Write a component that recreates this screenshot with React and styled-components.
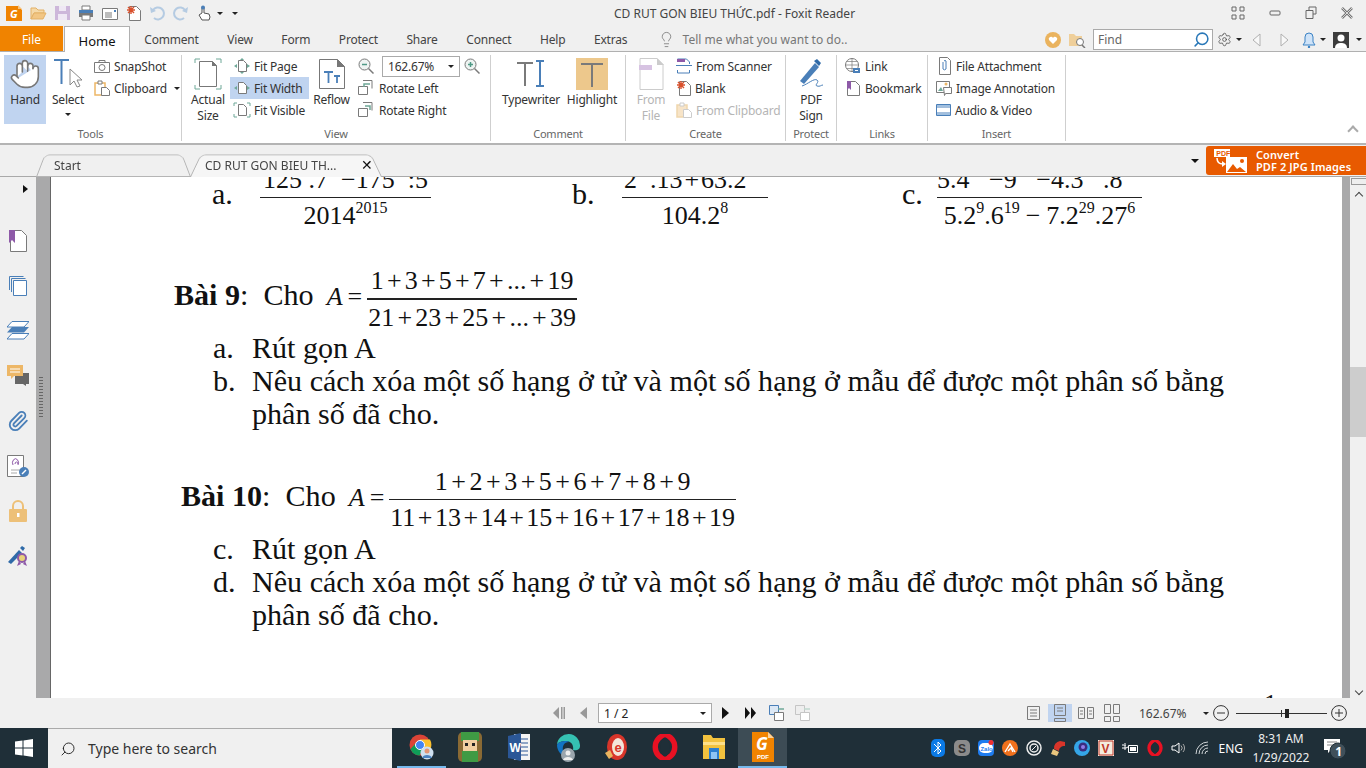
import React from "react";
import styled, { createGlobalStyle } from "styled-components";
import { Hand, Settings, Lightbulb, Search, Paperclip } from "lucide-react";

const GlobalStyle = createGlobalStyle`
    html, body { margin: 0; padding: 0; background: #f0f0f0; }
    body { font-family: "Noto Sans", "Open Sans", sans-serif; font-size: 12px; color: #333; overflow: hidden; }
    svg { display: block; flex: none; }
`;

const BLUE = "#4a7fb8";
const GREY = "#7a7a7a";
const ORANGE = "#edb767";
const PURPLE = "#8e5aa8";
const GREEN = "#6fa898";

const Screen = styled.div`
    width: 1366px; height: 768px; display: flex; flex-direction: column; overflow: hidden;
`;

/* ---------- title bar ---------- */
const TitleBar = styled.div`
    height: 26px; flex: none; display: flex; align-items: center; padding-left: 6px; background: #f0f0f0;
`;
const Qat = styled.div`
    display: flex; align-items: center; gap: 8px; width: 236px; flex: none;
`;
const Title = styled.div`
    margin-left: 372px; width: 300px; font-size: 12px; color: #444; white-space: nowrap;
`;
const WinControls = styled.div`
    margin-left: auto; display: flex; gap: 24px; padding-right: 13px;
`;
const Caret = styled.span`
    display: block; flex: none; width: 0; height: 0;
    border-left: ${p => p.$s || 3}px solid transparent;
    border-right: ${p => p.$s || 3}px solid transparent;
    border-top: ${p => p.$s || 3}px solid ${p => p.$c || "#222"};
`;

/* ---------- menu tabs ---------- */
const MenuBar = styled.div`
    height: 26px; flex: none; display: flex; align-items: stretch; background: #f0f0f0;
    border-bottom: 1px solid #b0b0b0; box-sizing: border-box;
`;
const FileTab = styled.div`
    width: 63px; background: #f08300; color: #fff; display: flex; align-items: center; justify-content: center; padding-top: 2px; box-sizing: border-box;
`;
const MenuTab = styled.div`
    padding: 2px ${p => (p.$active ? 14 : 14.3)}px 0; display: flex; align-items: center; white-space: nowrap; letter-spacing: -.2px;
    color: ${p => (p.$active ? "#111" : "#444")};
    ${p => p.$active && `
        margin: 0 0 -1px 1px; background: #fff; border: 1px solid #b0b0b0; border-bottom: 0; font-size: 13px; letter-spacing: 0;
        height: 26px; box-sizing: border-box; width: 66px; justify-content: center; padding: 2px 0 0;
    `}
`;
const TellMe = styled.div`
    display: flex; align-items: center; gap: 8px; margin-left: 16px; padding-top: 2px; color: #777; white-space: nowrap;
`;
const MenuRight = styled.div`
    margin-left: auto; display: flex; align-items: center; padding: 2px 4px 0 0;
`;
const FindBox = styled.div`
    width: 120px; height: 21px; margin: 0 4px 0 7px; box-sizing: border-box; background: #fff; border: 1px solid #aaa;
    display: flex; align-items: center; justify-content: space-between; padding: 0 2px 0 4px; color: #666;
`;
const Gap = styled.span`
    width: ${p => p.$w}px; flex: none;
`;

/* ---------- ribbon ---------- */
const Ribbon = styled.div`
    height: 93px; flex: none; display: flex; background: #fff; box-sizing: border-box; padding-top: 3px;
    border-bottom: 2px solid #b4b4b4; position: relative; letter-spacing: -.2px;
`;
const Group = styled.div`
    width: ${p => p.$w}px; flex: none; box-sizing: border-box; display: flex; flex-direction: column;
    border-right: 1px solid #cfcfcf; height: 86px;
`;
const GroupBody = styled.div`
    height: 72px; flex: none; display: flex; align-items: flex-start; padding-left: ${p => p.$pad || 0}px; gap: ${p => p.$gap || 0}px;
`;
const GroupLabel = styled.div`
    height: 14px; text-align: center; color: #666; font-size: 11px; line-height: 14px;
`;
const BigButton = styled.div`
    width: ${p => p.$w}px; height: 69px; flex: none; display: flex; flex-direction: column; align-items: center;
    background: ${p => (p.$on ? "#c0d4f0" : "transparent")};
    color: ${p => (p.$off ? "#b5b5b5" : "#333")};
    text-align: center; line-height: 16px; box-sizing: border-box;
`;
const BigIcon = styled.div`
    height: 37px; display: flex; align-items: center; justify-content: center; flex: none;
`;
const SmallCol = styled.div`
    display: flex; flex-direction: column; width: ${p => (p.$w ? p.$w + "px" : "auto")}; flex: none; margin-left: ${p => p.$ml || 0}px;
`;
const SmallButton = styled.div`
    height: 22px; display: flex; align-items: center; gap: ${p => p.$gap ?? 4}px; padding-left: 3px; white-space: nowrap;
    background: ${p => (p.$on ? "#c0d4f0" : "transparent")};
    color: ${p => (p.$off ? "#b5b5b5" : "#333")};
`;
const ZoomInput = styled.div`
    width: 78px; height: 21px; box-sizing: border-box; border: 1px solid #aaa; margin: 0 4px 0 8px; padding: 0 5px;
    display: flex; align-items: center; justify-content: space-between; color: #333;
`;
const Collapse = styled.div`
    position: absolute; right: 9px; bottom: 8px; width: 6px; height: 6px; border-left: 2px solid #aaa; border-top: 2px solid #aaa;
    transform: rotate(45deg);
`;

/* ---------- document tabs ---------- */
const DocTabs = styled.div`
    height: 32px; flex: none; display: flex; align-items: flex-end; background: #f0f0f0; padding-left: 36px;
    border-bottom: 1px solid #a9a9a9; box-sizing: border-box; position: relative;
`;
const DocTab = styled.div`
    position: relative; width: ${p => p.$w}px; height: 25px; margin-left: ${p => p.$ml || 0}px; display: flex; align-items: center;
    padding: 3px 0 0 ${p => (p.$active ? 15 : 18)}px; box-sizing: border-box; color: #444; white-space: nowrap; z-index: ${p => (p.$active ? 2 : 1)};
    &::before {
        content: ""; position: absolute; inset: 0 0 -1px 0; z-index: -1; background: ${p => (p.$active ? "#f6f6f6" : "#f0f0f0")};
        border: 1px solid #b4b4b4; border-bottom: ${p => (p.$active ? "0" : "1px solid #b4b4b4")}; border-radius: 6px 6px 0 0;
        transform: perspective(50px) rotateX(14deg); transform-origin: bottom;
    }
`;
const TabClose = styled.span`
    margin-left: auto; margin-right: 9px; font-size: 14px; color: #111; line-height: 1;
`;
const TabsEnd = styled.div`
    margin-left: auto; align-self: stretch; display: flex; align-items: center; gap: 7px;
`;
const Convert = styled.div`
    width: 160px; height: 29px; background: #e85a00; border-radius: 3px 0 0 3px; color: #fff; display: flex; align-items: center;
    box-sizing: border-box; padding-left: 8px; gap: 8px; font-size: 11px; line-height: 12px; font-weight: 600; letter-spacing: .1px;
`;

/* ---------- main area ---------- */
const Main = styled.div`
    flex: 1; min-height: 0; display: flex;
`;
const SideNav = styled.div`
    width: 36px; flex: none; background: #f0f0f0; display: flex; flex-direction: column; align-items: center; position: relative;
`;
const SideArrow = styled.div`
    width: 0; height: 0; margin: 8px 0 25px 14px; border-top: 4px solid transparent; border-bottom: 4px solid transparent; border-left: 5px solid #111;
`;
const SideIcon = styled.div`
    height: 45px; display: flex; align-items: center; justify-content: center;
`;
const Gutter = styled.div`
    width: 14px; flex: none; background: #a9a9aa; border-right: 1px solid #666; position: relative;
`;
const Grip = styled.div`
    position: absolute; left: 3px; top: 199px; width: 4px; height: 43px;
    background-image: radial-gradient(#666 45%, transparent 50%); background-size: 2px 3px;
`;
const Page = styled.div`
    width: 1291px; flex: none; background: #fff; overflow: hidden; font-family: "Liberation Serif", "Times New Roman", serif; color: #111;
`;
const Sheet = styled.div`
    margin-top: -9px; display: flex; flex-direction: column;
`;
const ExerciseRow = styled.div`
    display: flex; align-items: flex-start; padding-left: 161px; height: 60px;
`;
const Exercise = styled.div`
    width: ${p => p.$w}px; flex: none; display: flex; align-items: center; height: 60px;
`;
const Marker = styled.span`
    width: ${p => p.$w}px; flex: none; font-size: 30.1px; margin-top: -8px;
`;
const Fraction = styled.span`
    display: inline-flex; flex-direction: column; align-items: center; font-size: 26px; line-height: 30px; white-space: pre; flex: none;
    width: ${p => (p.$w ? p.$w + "px" : "auto")};
`;
const Numer = styled.span`
    padding-bottom: 2px; align-self: stretch; text-align: center; border-bottom: ${p => p.$thick || 1.5}px solid #222;
`;
const Denom = styled.span`
    padding: 3px 1px 0; align-self: stretch; text-align: center;
`;
const Op = styled.span`
    margin: 0 ${p => p.$g}px;
`;
const Sup = styled.sup`
    font-size: 16px; line-height: 0; vertical-align: 11px;
`;
const Statement = styled.div`
    display: flex; align-items: center; padding-left: ${p => p.$left}px; margin-top: ${p => p.$top}px; height: 70px; font-size: 30.1px; white-space: pre;
`;
const Lead = styled.span`
    display: flex; align-items: baseline; margin-bottom: 8px;
`;
const Bold = styled.b`
    font-weight: 700;
`;
const VarA = styled.i`
    font-size: 26px; margin: 0 5px 0 -2px;
`;
const Equals = styled.span`
    font-size: 26px; margin-right: 5px;
`;
const Tasks = styled.div`
    display: grid; grid-template-columns: 39px 990px; padding-left: 162px; font-size: 30.1px; line-height: 33px; margin-top: ${p => p.$top}px;
`;
const PageNumber = styled.div`
    margin: 57px 0 0 1213px; font-size: 26px; line-height: 30px;
`;
const ScrollBar = styled.div`
    width: 25px; flex: none; display: flex;
`;
const ScrollEdge = styled.div`
    width: 8px; background: #a9a9aa; flex: none;
`;
const ScrollTrack = styled.div`
    flex: 1; background: #f0f0f0; display: flex; flex-direction: column; align-items: center;
`;
const Splitter = styled.div`
    width: 16px; height: 7px; border: 1px solid #999; box-sizing: border-box; background: #eee; margin-top: 1px; flex: none;
`;
const Chevron = styled.div`
    width: 5px; height: 5px; border-left: 1.5px solid #444; border-top: 1.5px solid #444; flex: none;
    transform: rotate(${p => (p.$down ? 225 : 45)}deg); margin: ${p => p.$m};
`;
const Thumb = styled.div`
    width: 17px; height: 70px; background: #cdcdcd; margin-top: 168px; flex: none;
`;

/* ---------- status bar ---------- */
const StatusBar = styled.div`
    height: 30px; flex: none; display: flex; align-items: center; background: #f0f0f0; padding-left: 552px;
`;
const PageInput = styled.div`
    width: 114px; height: 20px; box-sizing: border-box; margin: 0 9px 0 10px; border: 1px solid #aaa; background: #fff; color: #222;
    display: flex; align-items: center; justify-content: space-between; padding: 0 5px;
`;
const ViewMode = styled.div`
    width: 24px; height: 18px; display: flex; align-items: center; justify-content: center; background: ${p => (p.$on ? "#c0d4f0" : "transparent")};
    margin-right: 2px;
`;
const ZoomValue = styled.div`
    margin-left: 13px; width: 64px; color: #444; flex: none;
`;
const Slider = styled.div`
    position: relative; width: 91px; height: 1px; background: #333; margin: 0 4px 0 7px;
`;
const SliderKnob = styled.div`
    position: absolute; left: 49px; top: -4px; width: 4px; height: 9px; background: #222;
`;
const SliderTick = styled.div`
    position: absolute; left: 45px; top: -3px; width: 1px; height: 7px; background: #333;
`;

/* ---------- taskbar ---------- */
const Taskbar = styled.div`
    height: 40px; flex: none; display: flex; background: #1f2f38; color: #fff;
`;
const StartBtn = styled.div`
    width: 48px; display: flex; align-items: center; justify-content: center; flex: none;
`;
const SearchBox = styled.div`
    width: 344px; flex: none; background: #f0f0f0; display: flex; align-items: center; gap: 12px; padding-left: 12px; box-sizing: border-box;
    color: #333; font-size: 14px; border-top: 1px solid #aaa;
`;
const TaskApps = styled.div`
    display: flex; margin-left: 5px;
`;
const TaskApp = styled.div`
    width: 48.75px; display: flex; align-items: center; justify-content: center; box-sizing: border-box;
    background: ${p => (p.$on ? "#3d4c55" : "transparent")};
    border-bottom: 2px solid ${p => (p.$open ? "#76b9ed" : "transparent")};
`;
const Tray = styled.div`
    margin-left: auto; display: flex; align-items: center; gap: 8px; padding-right: 19px;
`;
const Lang = styled.div`
    font-size: 12px; margin: 0 0 0 -2px;
`;
const Clock = styled.div`
    width: 70px; text-align: center; font-size: 12px; line-height: 19px; color: #eee; margin-left: -5px; margin-right: -1px;
`;

const Ico = ({ w = 16, h = 16, children }) => (
    <svg width={w} height={h} viewBox={`0 0 ${w} ${h}`} fill="none">{children}</svg>
);
const DocShape = ({ x = 3, y = 1, w = 11, h = 14, s = GREY }) => (
    <path d={`M${x + .5} ${y + .5}h${w - 4}l4 4v${h - 4}h-${w}z`} fill="#fff" stroke={s} />
);

const FoxitLogo = () => (
    <Ico><path d="M0 1h12l4 4v11H0z" fill="#f08300" /><path d="M12 0l4 4h-4z" fill="#f6c27d" /><text x="4" y="13" fontSize="11" fontWeight="700" fontStyle="italic" fill="#fff" fontFamily="Noto Sans">G</text></Ico>
);
const FolderOpen = () => (
    <Ico w={17}><path d="M1 3h5l2 2h6v3H4L1 14z" fill="#f5d9a8" stroke="#e3b167" /><path d="M4 8h12l-3 6H1z" fill="#f2c684" stroke="#e3b167" /></Ico>
);
const Floppy = () => (
    <Ico w={15}><path d="M0 1h15v14H0z" fill="#cdb7da" /><path d="M4 1h7v5H4zM3 9h9v6H3z" fill="#efe8f4" /></Ico>
);
const Printer = () => (
    <Ico><path d="M4 1h8v4H4z" fill="#fff" stroke={GREY} /><path d="M1 5h14v7H1z" fill={GREY} /><path d="M1 5h14v3H1z" fill={BLUE} /><path d="M4 10h8v5H4z" fill="#fff" stroke={GREY} /></Ico>
);
const Mail = () => (
    <Ico><path d="M.5 3.5h15v11H.5z" fill="#fff" stroke={GREY} /><path d="M3 8h7M3 10h7M3 12h7" stroke={GREY} /><path d="M12 5h2v2h-2z" fill={BLUE} /></Ico>
);
const NewSpark = () => (
    <Ico w={15}><DocShape x={3} y={1} w={11} h={14} /><path d="M5 1v8M1 5h8M2 2l6 6M8 2L2 8" stroke="#d9502c" strokeWidth="1.4" /></Ico>
);
const Turn = ({ flip }) => (
    <Ico><g transform={flip ? "translate(16 0) scale(-1 1)" : undefined}><path d="M4 5a6 6 0 1 1 1 8" stroke="#b5cbe2" strokeWidth="2" /><path d="M1 2l1 6 5-2z" fill="#b5cbe2" /></g></Ico>
);
const TouchHand = () => (
    <Ico w={17}><path d="M5 8V3a1 1 0 0 1 2 0v5l5 1 1 3-1 3H5L2 10z" fill="#fff" stroke="#555" /><circle cx="6" cy="2.5" r="2" fill={BLUE} /></Ico>
);
const FullScreen = () => (
    <Ico w={14} h={14}><path d="M1 1h4v4H1zM9 1h4v4H9zM1 9h4v4H1zM9 9h4v4H9z" stroke="#666" /></Ico>
);
const Minimize = () => (
    <Ico w={12} h={14}><rect x="1" y="5" width="10" height="4" rx="1" stroke="#666" /></Ico>
);
const Restore = () => (
    <Ico w={12} h={14}><path d="M4 4V1h7v7H8" stroke="#666" /><path d="M1 4.500h7v8H1z" stroke="#666" /></Ico>
);
const CloseX = () => (
    <Ico w={12} h={14}><path d="M1 2l10 10M11 2L1 12" stroke="#777" strokeWidth="2.500" /><path d="M1 2l10 10M11 2L1 12" stroke="#f0f0f0" strokeWidth=".8" /></Ico>
);
const Heart = () => (
    <Ico><circle cx="8" cy="8" r="8" fill="#eab35e" /><path d="M8 12L4 8a2 2 0 0 1 4-2 2 2 0 0 1 4 2z" fill="#fff" /></Ico>
);
const FolderFind = () => (
    <Ico w={17}><path d="M0 2h5l2 2h6v10H0z" fill="#efcf9a" /><circle cx="11" cy="10" r="3.500" fill="#fff" stroke="#777" /><path d="M13 13l3 3" stroke="#777" strokeWidth="1.500" /></Ico>
);
const NavTriangle = ({ flip }) => (
    <Ico w={9} h={14}><path d={flip ? "M1 1l7 6-7 6z" : "M8 1L1 7l7 6z"} stroke="#b0b0b0" fill="#f8f8f8" /></Ico>
);
const BellIcon = () => (
    <Ico><path d="M8 1a4 4 0 0 1 4 4v5l2 3H2l2-3V5a4 4 0 0 1 4-4z" fill="#cfe3f8" stroke="#3b82c4" /><circle cx="8" cy="15" r="1.200" fill="#3b82c4" /></Ico>
);
const Avatar = () => (
    <Ico><path d="M0 0h16v16H0z" fill="#3c3c3c" /><circle cx="8" cy="6" r="3.500" fill="#fff" /><path d="M2 16c0-4 3-5 6-5s6 1 6 5z" fill="#fff" /></Ico>
);
const SelectIcon = () => (
    <Ico w={30} h={32}><path d="M1 2h15M8.500 2v24" stroke={BLUE} strokeWidth="2" /><path d="M17 11v16l4-4 3 6 3-1-3-6h5z" fill="#fff" stroke="#888" /></Ico>
);
const CameraIcon = () => (
    <Ico><path d="M.5 4.500h15v10H.5z" fill="#fff" stroke={GREY} /><path d="M5 2.500h6v2H5z" stroke={GREY} /><circle cx="8" cy="9.500" r="3" stroke={GREY} /></Ico>
);
const ClipIcon = ({ off }) => (
    <Ico><path d="M1 3h10v12H1z" fill={off ? "#f7e4c8" : "#fff"} stroke={off ? "#f0d6ad" : ORANGE} strokeWidth="1.500" /><path d="M4 1h4v3H4z" fill="#fff" stroke={off ? "#ccc" : GREY} /><path d="M7.500 7.500h5l3 3v5h-8z" fill="#fff" stroke={off ? "#ccc" : GREY} /></Ico>
);
const ActualIcon = () => (
    <Ico w={28} h={32}><path d="M1 5V1h5M22 1h5v4M1 27v4h5M22 31h5v-4" stroke={GREEN} /><path d="M5.500 3.500h13l4 4v21h-17z" fill="#fff" stroke="#777" /><path d="M18 3l5 5h-5z" fill="#777" /></Ico>
);
const FitIcon = ({ kind }) => (
    <Ico w={18}>
        <path d="M5.500 2.500h5l3 3v8h-8z" fill="#fff" stroke={GREY} />
        {kind === "page" && <path d="M9 0l2 2H7zM9 16l2-2H7zM1 8l3-2v4zM17 8l-3-2v4z" fill={GREEN} />}
        {kind === "width" && <path d="M1 8l3-2v4zM17 8l-3-2v4z" fill={GREEN} />}
        {kind === "visible" && <path d="M1 4V1h3M14 1h3v3M1 12v3h3M14 15h3v-3" stroke={GREEN} />}
    </Ico>
);
const ReflowIcon = () => (
    <Ico w={26} h={30}><path d="M.500.500h18l7 7v22H.500z" fill="#fff" stroke="#777" /><path d="M18 0l8 8h-8z" fill="#777" /><path d="M5 13h9M9.500 13v11M15 17h6M18 17v7" stroke={BLUE} strokeWidth="1.800" /></Ico>
);
const Magnifier = ({ plus }) => (
    <Ico><circle cx="6.500" cy="6.500" r="5.500" fill="#eef4f2" stroke={GREY} /><path d={plus ? "M4 6.500h5M6.500 4v5" : "M4 6.500h5"} stroke="#4f9a86" strokeWidth="1.500" /><path d="M10.500 10.500l5 5" stroke={GREY} strokeWidth="1.500" /></Ico>
);
const RotateIcon = ({ right }) => (
    <Ico w={15}><path d="M.5 6.500h9v8h-9z" fill="#fff" stroke={GREY} /><path d="M5 .5h9v8" stroke={GREY} /><path d={right ? "M7 4h5v4" : "M12 4H6v3"} stroke={GREEN} strokeWidth="1.500" /></Ico>
);
const TypewriterIcon = () => (
    <Ico w={30} h={30}><path d="M1 4h16M9 4v23" stroke={GREY} strokeWidth="2" /><path d="M20 2h8M24 2v25M20 27h8" stroke={BLUE} strokeWidth="2" /></Ico>
);
const HighlightIcon = () => (
    <Ico w={32} h={32}><path d="M0 0h32v32H0z" fill="#edc88c" /><path d="M5 6h22M16 6v23" stroke={GREY} strokeWidth="2" /></Ico>
);
const FromFileIcon = () => (
    <Ico w={25} h={32}><path d="M1 .5h17l6 6v25H1z" fill="#fff" stroke="#ccc" /><path d="M18 0l7 7h-7z" fill="#ccc" /><path d="M0 7h13v5H0z" fill="#d7c3e2" /></Ico>
);
const ScannerIcon = () => (
    <Ico><path d="M1.500 4V1h9l3 3v2M1.500 12v3h12v-3" stroke={BLUE} /><path d="M0 7.500h16" stroke={BLUE} /><path d="M1 1h8v3H1z" fill={PURPLE} /></Ico>
);
const SignIcon = () => (
    <Ico w={26} h={32}><path d="M2 23L17 5l4 4L6 26z" fill={BLUE} /><path d="M16 3l3-2 4 4-2 3z" fill="#2f6aa8" /><path d="M4 28c6-2 12-8 15-6s-3 5 0 6 4-1 6-1" stroke={BLUE} /></Ico>
);
const GlobeLink = () => (
    <Ico><circle cx="7" cy="7" r="6.500" fill="#fff" stroke={GREY} /><path d="M.5 7h13M7 .5v13M2 3.500h10M2 10.500h10" stroke={GREY} strokeWidth=".7" /><path d="M8 10h7v5H8z" fill={BLUE} /><path d="M10 12.500h3" stroke="#fff" /></Ico>
);
const BookmarkDoc = () => (
    <Ico><DocShape x={2} y={1} w={12} h={14} /><path d="M2 1h4v9L4 8l-2 2z" fill={PURPLE} /></Ico>
);
const AttachIcon = () => (
    <Ico h={18}><path d="M3.500.5h8l3 3v14h-11z" fill="#fff" stroke={GREY} /><path d="M7 5v7a2 2 0 0 0 3 0V4a1.300 1.300 0 0 0-2 0" stroke={BLUE} /></Ico>
);
const ImageNote = () => (
    <Ico><path d="M.5 1.500h13v11H.5z" fill="#fff" stroke={GREY} /><path d="M2 11l3-4 2 4z" fill={GREEN} /><circle cx="10" cy="4" r="1.500" fill={ORANGE} /><path d="M7.500 7.500h8v6h-6l-1 2z" fill="#fff" stroke={GREY} /></Ico>
);
const FilmIcon = () => (
    <Ico w={15}><path d="M.5 2.500h14v11H.5z" fill="#fff" stroke={BLUE} /><path d="M0 5h15M0 11h15" stroke={BLUE} /><path d="M1 3h13v1.500H1zM1 11.500h13V13H1z" fill="#9fbfe0" /></Ico>
);
const PdfConvert = () => (
    <Ico w={34} h={24}>
        <path d="M0 0h16v8H0z" fill="#fff" /><text x="2.200" y="7" fontSize="7" fontWeight="700" fill="#e85a00" fontFamily="Liberation Sans">PDF</text>
        <path d="M3 9c0 4 2 6 6 6" stroke="#fff" strokeWidth="1.500" /><path d="M8 12l4 3-4 3z" fill="#fff" />
        <path d="M12 8h21v16H12z" fill="#fff" /><path d="M13 23l6-8 4 5 3-2 6 5z" fill="#e85a00" /><circle cx="28" cy="12" r="2" fill="#e85a00" />
    </Ico>
);

const NavBookmark = () => (
    <Ico w={18} h={22}><path d="M1.500.5h11l5 5v16h-16z" fill="#fff" stroke={GREY} /><path d="M0 0h6v13l-3-3-3 3z" fill={PURPLE} /></Ico>
);
const NavPages = () => (
    <Ico w={18} h={20}><path d="M.5 14V.5h14M2.500 16V2.500h14" stroke={BLUE} /><path d="M4.500 4.500h13v15h-13z" fill="#fff" stroke={BLUE} /></Ico>
);
const NavLayers = () => (
    <Ico w={22} h={19}><path d="M5 .5h17L17 6H0z" fill="#fff" stroke={BLUE} /><path d="M5 6h17l-5 5.500H0z" fill={BLUE} /><path d="M5 12.500h17L17 18H0z" fill="#fff" stroke={BLUE} /></Ico>
);
const NavComments = () => (
    <Ico w={22} h={21}><path d="M8 8h14v11h-3v2l-3-2H8z" fill="#666" /><path d="M0 0h16v11H7l-3 3v-3H0z" fill={ORANGE} /><path d="M3 4h10M3 7h10" stroke="#fff" /></Ico>
);
const NavSecurity = () => (
    <Ico w={22} h={22}><path d="M.5.5h16v21H.5z" fill="#fff" stroke={GREY} /><path d="M4 15h9M4 18h6" stroke="#aaa" /><path d="M6 10a3 4 0 1 1 5 0M8 9a1.500 2 0 1 1 3 0" stroke={PURPLE} /><circle cx="17" cy="17" r="5" fill={BLUE} /><path d="M15 19l4-4" stroke="#fff" strokeWidth="1.500" /></Ico>
);
const NavLock = () => (
    <Ico w={18} h={22}><path d="M4 10V6a5 5 0 0 1 10 0v4" stroke="#edc078" strokeWidth="2" /><rect y="9" width="18" height="13" rx="1" fill="#edc078" /><path d="M8 13h2.500v4H8z" fill="#fff" /></Ico>
);
const NavSign = () => (
    <Ico w={20} h={22}><path d="M0 17L11 5l3 3L3 19z" fill="#2f6aa8" /><path d="M12 3l2-2 3 2-2 3z" fill="#2f6aa8" /><circle cx="14" cy="13" r="4" fill="#e8d27a" stroke={PURPLE} strokeWidth="2" /><path d="M11 16l-2 5 4-2M17 16l2 5-4-2" fill={PURPLE} /></Ico>
);

const FirstIcon = ({ last, c = "#999" }) => (
    <Ico w={13}>{last
        ? <path d="M1 2l5 6-5 6zM7 2l5 6-5 6z" fill="#111" />
        : <><path d="M7 2L1 8l6 6z" fill={c} /><path d="M9 2h1.500v12H9zM11.500 2H13v12h-1.500z" fill={c} /></>}</Ico>
);
const StepIcon = ({ next }) => (
    <Ico w={9}><path d={next ? "M1 2l7 6-7 6z" : "M8 2L1 8l7 6z"} fill={next ? "#111" : "#999"} /></Ico>
);
const PrevView = ({ off }) => {
    const c = off ? "#c5c5c5" : GREY;
    return <Ico><path d="M.5.5h9v9h-9z" fill={off ? "#eee" : "#dce8f5"} stroke={off ? "#c5c5c5" : BLUE} /><path d="M5.500 7.500h9v8h-9z" fill="#fff" stroke={c} /><path d="M15 4H9" stroke={off ? "#c0d8cf" : GREEN} strokeWidth="1.500" /></Ico>;
};
const ViewSingle = () => (
    <Ico w={14}><path d="M.5 1.500h12v13H.5z" stroke={GREY} /><path d="M3 5h7M3 8h7M3 11h7" stroke={GREY} /></Ico>
);
const ViewCont = () => (
    <Ico h={18}><path d="M2.500.500h11v11h-11zM2.500 14.500h11v3h-11z" stroke={GREY} /><path d="M5 4h6M5 7h6" stroke={GREY} /></Ico>
);
const ViewFacing = () => (
    <Ico><path d="M.5 2.500h6v11h-6zM9.500 2.500h6v11h-6z" stroke={GREY} /><path d="M2 6h3M2 9h3M11 6h3M11 9h3" stroke={GREY} /></Ico>
);
const ViewFacingCont = () => (
    <Ico h={18}><path d="M.5.500h6v9h-6zM9.500.500h6v9h-6zM.5 12.500h6v5h-6zM9.500 12.500h6v5h-6z" stroke={GREY} /></Ico>
);
const RoundBtn = ({ plus }) => (
    <Ico><circle cx="8" cy="8" r="7.400" stroke="#333" /><path d={plus ? "M4 8h8M8 4v8" : "M4 8h8"} stroke="#333" /></Ico>
);

const WinLogo = () => (
    <Ico w={18} h={18}><path d="M0 2.500L7.500 1.500v7H0zM8.500 1.400L18 0v8.500H8.500zM0 9.500h7.500v7L0 15.500zM8.500 9.500H18V18l-9.500-1.400z" fill="#fff" /></Ico>
);
const ChromeApp = () => (
    <Ico w={25} h={26}>
        <circle cx="11" cy="11" r="10.500" fill="#db4437" /><path d="M1.500 15a10.500 10.500 0 0 0 9 6.500L15 13 7 9z" fill="#0f9d58" /><path d="M11 5.500h10A10.500 10.500 0 0 1 14 21z" fill="#fbc02d" />
        <circle cx="11" cy="11" r="4.500" fill="#4285f4" stroke="#fff" />
        <circle cx="18" cy="19" r="6.500" fill="#cfe0ef" /><circle cx="18" cy="17" r="2.500" fill="#e29575" /><path d="M13 24c1-4 9-4 10 0z" fill="#4a82c0" />
    </Ico>
);
const GameApp = () => (
    <Ico w={24} h={30}><rect width="24" height="30" rx="5" fill="#8a6a34" /><path d="M3 0h18v9H3z" fill="#3f9a44" /><path d="M5 8h14v11H5z" fill="#f1cfa1" /><path d="M7 11h3v3H7zM14 11h3v3h-3z" fill="#222" /><path d="M4 19h16v11H4z" fill="#3f9a44" /></Ico>
);
const WordApp = () => (
    <Ico w={22} h={30}><path d="M6 2h16v26H6z" fill="#f4f4f4" /><path d="M12 7h8M12 11h8M12 15h8M12 19h8M12 23h8" stroke="#2b5797" /><path d="M0 4l13-3v28L0 26z" fill="#2b5797" /><text x="1.500" y="20" fontSize="12" fontWeight="700" fill="#fff" fontFamily="Liberation Sans">W</text></Ico>
);
const EdgeApp = () => (
    <Ico w={24} h={30}>
        <path d="M1 13a11.500 11.500 0 0 1 23 1c0 4-4 5-7 4 1-5-2-9-7-9-4 0-8 1-9 4z" fill="#35c1b2" /><path d="M1 13c1-3 5-4 9-4 2 0 3 1 3 1-5 0-7 4-6 9 1 3 4 5 7 5-7 2-13-4-13-11z" fill="#1273c2" />
        <circle cx="12" cy="23" r="7" fill="#9aa5ad" /><circle cx="12" cy="21" r="2.500" fill="#eee" /><path d="M7 28c1-4 9-4 10 0z" fill="#eee" />
    </Ico>
);
const RedC = () => (
    <Ico w={22} h={28}><ellipse cx="12" cy="14" rx="10" ry="13" fill="#d8352a" /><ellipse cx="13" cy="14" rx="6" ry="9" fill="#f3e5da" /><text x="9.500" y="19" fontSize="13" fontWeight="700" fill="#d8352a" fontFamily="Liberation Sans">e</text><path d="M0 20l5-3 3 6-4 3z" fill="#eab35e" /></Ico>
);
const OperaIcon = ({ s = 24 }) => (
    <svg width={s} height={s} viewBox="0 0 24 24" fill="none"><ellipse cx="12" cy="12" rx="9" ry="10.500" stroke="#e81123" strokeWidth="5" /><ellipse cx="12" cy="12" rx="4" ry="9" fill="#1f2f38" /></svg>
);
const FolderApp = () => (
    <Ico w={22} h={26}><path d="M0 1h8l2 3h12v21H0z" fill="#f2c23e" /><path d="M0 8h22v3H0z" fill="#fde08a" /><path d="M6 14h10v11H6z" fill="#2c7fcf" /><path d="M8 18h6v7H8z" fill="#8ec4f2" /></Ico>
);
const FoxitApp = () => (
    <Ico w={24} h={30}><path d="M1 0h16l6 6v24H1z" fill="#f08300" /><path d="M17 0l6 6h-6z" fill="#fbd29b" /><text x="5" y="18" fontSize="17" fontWeight="700" fontStyle="italic" fill="#fff" fontFamily="Noto Sans">G</text><text x="6" y="27" fontSize="6" fontWeight="700" fill="#fff" fontFamily="Liberation Sans">PDF</text></Ico>
);

const TrayBt = () => (
    <Ico h={18}><rect x="1" width="14" height="18" rx="5" fill="#0b7ae6" /><path d="M4 5l7 7-3 3V3l3 3-7 7" stroke="#fff" /></Ico>
);
const TrayS = () => (
    <Ico h={16}><rect width="16" height="16" rx="5" fill="#8b8b8b" /><text x="4" y="13" fontSize="12" fontWeight="700" fill="#333" fontFamily="Liberation Sans">S</text></Ico>
);
const TrayZalo = () => (
    <Ico h={16}><rect width="16" height="16" rx="4" fill="#1e7cf0" /><rect x="1" y="3" width="14" height="10" rx="5" fill="#fff" /><text x="2.400" y="11" fontSize="6" fontWeight="700" fill="#1e7cf0" fontFamily="Liberation Sans">Zalo</text><circle cx="13" cy="2.500" r="2.500" fill="#f03030" /></Ico>
);
const TrayOrange = () => (
    <Ico><circle cx="8" cy="8" r="8" fill="#f2711c" /><path d="M3 12l5-8 5 8M6 11l3-3 2 4" stroke="#fff" strokeWidth="1.400" /></Ico>
);
const TrayRing = () => (
    <Ico><circle cx="8" cy="8" r="7" stroke="#eee" strokeWidth="1.500" /><circle cx="8" cy="8" r="4" stroke="#eee" strokeWidth="1.500" /><path d="M6 10l4-4" stroke="#eee" /></Ico>
);
const TrayBrush = () => (
    <Ico h={17}><path d="M10 1a7 7 0 0 0-6 8l5 2c0-3 2-5 6-5V2z" fill="#d8352a" /><path d="M3 9l6 3-2 4-6-2z" fill="#e9c67e" /></Ico>
);
const TrayDisc = () => (
    <Ico><circle cx="8" cy="8" r="8" fill="#35a6e8" /><circle cx="9" cy="7" r="4.500" fill="#3a2d80" /><circle cx="9" cy="7" r="2" fill="#8f7be8" /></Ico>
);
const TrayV = () => (
    <Ico h={16}><path d="M0 0h16v16H0z" fill="#f4ecdf" /><path d="M1 1h14v14H1z" stroke="#c0392b" /><text x="3.500" y="13" fontSize="12" fontWeight="700" fill="#c0392b" fontFamily="Liberation Sans">V</text></Ico>
);
const TrayPlug = () => (
    <Ico w={17}><path d="M6.500 5.500h9v7h-9z" stroke="#fff" /><path d="M8 7h6v4H8z" fill="#fff" /><path d="M0 8h4l2-1M3 5v5" stroke="#fff" /><path d="M1 4v2M3 3v3" stroke="#fff" /></Ico>
);
const TrayVolume = () => (
    <Ico><path d="M1 6h3l4-3v10l-4-3H1z" stroke="#fff" /><path d="M10 5.500a3.500 3.500 0 0 1 0 5M12 4a6 6 0 0 1 0 8" stroke="#aaa" /></Ico>
);
const TrayWifi = () => (
    <Ico w={17}><path d="M1 14a12 12 0 0 1 12-12M4 14a9 9 0 0 1 9-9M7 14a6 6 0 0 1 6-6M10 14a3 3 0 0 1 3-3" stroke="#cfd4d7" /></Ico>
);
const NotifyIcon = () => (
    <Ico w={24} h={24}>
        <path d="M1 3h16v11H8l-3 3v-3H1z" fill="#fff" /><path d="M4 6h10M4 9h10" stroke="#888" />
        <circle cx="15" cy="15" r="8" fill="#40505a" stroke="#1f2f38" /><text x="12.300" y="19.500" fontSize="12" fontWeight="700" fill="#fff" fontFamily="Noto Sans">1</text>
    </Ico>
);

function Expr({ text, g = 3 }) {
    const parts = text.split("+");
    return parts.map((part, i) => (
        <React.Fragment key={i}>
            {i > 0 && <Op $g={g}>+</Op>}
            {part}
        </React.Fragment>
    ));
}

const menuTabs = ["Comment", "View", "Form", "Protect", "Share", "Connect", "Help", "Extras"];

export default function App() {
    return (
        <Screen>
            <GlobalStyle />
            <TitleBar>
                <Qat>
                    <FoxitLogo /><FolderOpen /><Floppy /><Printer /><Mail /><NewSpark /><Turn /><Turn flip /><TouchHand />
                    <Caret $s={3} style={{ marginLeft: -5 }} /><Caret $s={3} style={{ marginLeft: 1 }} />
                </Qat>
                <Title>CD RUT GON BIEU THỨC.pdf - Foxit Reader</Title>
                <WinControls><FullScreen /><Minimize /><Restore /><CloseX /></WinControls>
            </TitleBar>

            <MenuBar>
                <FileTab>File</FileTab>
                <MenuTab $active>Home</MenuTab>
                {menuTabs.map(t => <MenuTab key={t}>{t}</MenuTab>)}
                <TellMe><Lightbulb size={17} strokeWidth={1} color="#666" />Tell me what you want to do..</TellMe>
                <MenuRight>
                    <Heart /><Gap $w={8} /><FolderFind />
                    <FindBox>Find<Search size={17} color="#2a78b8" strokeWidth={2.2} style={{ transform: "scaleX(-1)" }} /></FindBox>
                    <Settings size={15} strokeWidth={1.2} color="#444" /><Gap $w={4} /><Caret $s={3} />
                    <Gap $w={10} /><NavTriangle /><Gap $w={19} /><NavTriangle flip />
                    <Gap $w={12} /><BellIcon /><Gap $w={3} /><Caret $s={3} />
                    <Gap $w={7} /><Avatar /><Gap $w={7} /><Caret $s={3} />
                </MenuRight>
            </MenuBar>

            <Ribbon>
                <Group $w={182}>
                    <GroupBody $pad={4} $gap={4}>
                        <BigButton $w={42} $on><BigIcon><Hand size={32} strokeWidth={1.2} color="#777" fill="#fff" /></BigIcon>Hand</BigButton>
                        <BigButton $w={36}><BigIcon><SelectIcon /></BigIcon>Select<Caret $s={3} style={{ marginTop: 5 }} /></BigButton>
                        <SmallCol $ml={1}>
                            <SmallButton><CameraIcon />SnapShot</SmallButton>
                            <SmallButton><ClipIcon />Clipboard <Caret $s={3} style={{ marginLeft: 3 }} /></SmallButton>
                        </SmallCol>
                    </GroupBody>
                    <GroupLabel>Tools</GroupLabel>
                </Group>
                <Group $w={309}>
                    <GroupBody $pad={8} $gap={4}>
                        <BigButton $w={36}><BigIcon><ActualIcon /></BigIcon>Actual<br />Size</BigButton>
                        <SmallCol $w={79}>
                            <SmallButton $gap={3}><FitIcon kind="page" />Fit Page</SmallButton>
                            <SmallButton $gap={3} $on><FitIcon kind="width" />Fit Width</SmallButton>
                            <SmallButton $gap={3}><FitIcon kind="visible" />Fit Visible</SmallButton>
                        </SmallCol>
                        <BigButton $w={37}><BigIcon><ReflowIcon /></BigIcon>Reflow</BigButton>
                        <SmallCol $ml={1}>
                            <SmallButton $gap={0}><Magnifier /><ZoomInput>162.67%<Caret $s={3} /></ZoomInput><Magnifier plus /></SmallButton>
                            <SmallButton $gap={6}><RotateIcon />Rotate Left</SmallButton>
                            <SmallButton $gap={6}><RotateIcon right />Rotate Right</SmallButton>
                        </SmallCol>
                    </GroupBody>
                    <GroupLabel>View</GroupLabel>
                </Group>
                <Group $w={135}>
                    <GroupBody $pad={9} $gap={1}>
                        <BigButton $w={62}><BigIcon><TypewriterIcon /></BigIcon>Typewriter</BigButton>
                        <BigButton $w={58}><BigIcon><HighlightIcon /></BigIcon>Highlight</BigButton>
                    </GroupBody>
                    <GroupLabel>Comment</GroupLabel>
                </Group>
                <Group $w={160}>
                    <GroupBody $pad={8} $gap={5}>
                        <BigButton $w={34} $off><BigIcon><FromFileIcon /></BigIcon>From<br />File</BigButton>
                        <SmallCol>
                            <SmallButton><ScannerIcon />From Scanner</SmallButton>
                            <SmallButton><NewSpark />Blank</SmallButton>
                            <SmallButton $off><ClipIcon off />From Clipboard</SmallButton>
                        </SmallCol>
                    </GroupBody>
                    <GroupLabel>Create</GroupLabel>
                </Group>
                <Group $w={51}>
                    <GroupBody>
                        <BigButton $w={50}><BigIcon><SignIcon /></BigIcon>PDF<br />Sign</BigButton>
                    </GroupBody>
                    <GroupLabel>Protect</GroupLabel>
                </Group>
                <Group $w={91}>
                    <GroupBody $pad={5}>
                        <SmallCol>
                            <SmallButton><GlobeLink />Link</SmallButton>
                            <SmallButton><BookmarkDoc />Bookmark</SmallButton>
                        </SmallCol>
                    </GroupBody>
                    <GroupLabel>Links</GroupLabel>
                </Group>
                <Group $w={138}>
                    <GroupBody $pad={5}>
                        <SmallCol>
                            <SmallButton><AttachIcon />File Attachment</SmallButton>
                            <SmallButton><ImageNote />Image Annotation</SmallButton>
                            <SmallButton><FilmIcon />Audio &amp; Video</SmallButton>
                        </SmallCol>
                    </GroupBody>
                    <GroupLabel>Insert</GroupLabel>
                </Group>
                <Collapse />
            </Ribbon>

            <DocTabs>
                <DocTab $w={155}>Start</DocTab>
                <DocTab $w={192} $ml={-1} $active>CD RUT GON BIEU TH...<TabClose>✕</TabClose></DocTab>
                <TabsEnd>
                    <Caret $s={4.500} $c="#111" />
                    <Convert><PdfConvert /><span>Convert<br />PDF 2 JPG Images</span></Convert>
                </TabsEnd>
            </DocTabs>

            <Main>
                <SideNav>
                    <SideArrow />
                    <SideIcon><NavBookmark /></SideIcon>
                    <SideIcon><NavPages /></SideIcon>
                    <SideIcon><NavLayers /></SideIcon>
                    <SideIcon><NavComments /></SideIcon>
                    <SideIcon><Paperclip size={22} color={BLUE} strokeWidth={2} /></SideIcon>
                    <SideIcon><NavSecurity /></SideIcon>
                    <SideIcon><NavLock /></SideIcon>
                    <SideIcon><NavSign /></SideIcon>
                </SideNav>
                <Gutter><Grip /></Gutter>
                <Page>
                    <Sheet>
                        <ExerciseRow>
                            <Exercise $w={360}>
                                <Marker $w={48}>a.</Marker>
                                <Fraction $w={171}>
                                    <Numer>125 .7  −175  :5</Numer>
                                    <Denom>2014<Sup>2015</Sup></Denom>
                                </Fraction>
                            </Exercise>
                            <Exercise $w={330}>
                                <Marker $w={50}>b.</Marker>
                                <Fraction $w={146}>
                                    <Numer>2  .13<Op $g={2}>+</Op>63.2   </Numer>
                                    <Denom>104.2<Sup>8</Sup></Denom>
                                </Fraction>
                            </Exercise>
                            <Exercise $w={320}>
                                <Marker $w={35}>c.</Marker>
                                <Fraction $w={205}>
                                    <Numer>5.4   −9   −4.3   .8   </Numer>
                                    <Denom>5.2<Sup>9</Sup>.6<Sup>19</Sup><Op $g={6}>−</Op>7.2<Sup>29</Sup>.27<Sup>6</Sup></Denom>
                                </Fraction>
                            </Exercise>
                        </ExerciseRow>
                        <Statement $left={123} $top={36}>
                            <Lead><Bold>Bài 9</Bold>:  Cho  <VarA>A</VarA><Equals>=</Equals></Lead>
                            <Fraction>
                                <Numer $thick={2}><Expr text="1+3+5+7+...+19" g={3.2} /></Numer>
                                <Denom><Expr text="21+23+25+...+39" g={3.2} /></Denom>
                            </Fraction>
                        </Statement>
                        <Tasks $top={-2}>
                            <span>a.</span><span>Rút gọn A</span>
                            <span>b.</span><span>Nêu cách xóa một số hạng ở tử và một số hạng ở mẫu để được một phân số bằng phân số đã cho.</span>
                        </Tasks>
                        <Statement $left={130} $top={34}>
                            <Lead><Bold>Bài 10</Bold>:  Cho  <VarA>A</VarA><Equals>=</Equals></Lead>
                            <Fraction>
                                <Numer><Expr text="1+2+3+5+6+7+8+9" g={3.5} /></Numer>
                                <Denom><Expr text="11+13+14+15+16+17+18+19" g={2.5} /></Denom>
                            </Fraction>
                        </Statement>
                        <Tasks $top={-2}>
                            <span>c.</span><span>Rút gọn A</span>
                            <span>d.</span><span>Nêu cách xóa một số hạng ở tử và một số hạng ở mẫu để được một phân số bằng phân số đã cho.</span>
                        </Tasks>
                        <PageNumber>1</PageNumber>
                    </Sheet>
                </Page>
                <ScrollBar>
                    <ScrollEdge />
                    <ScrollTrack>
                        <Splitter />
                        <Chevron $m="8px 0 0" />
                        <Thumb />
                        <Chevron $down $m="auto 0 4px" />
                    </ScrollTrack>
                </ScrollBar>
            </Main>

            <StatusBar>
                <FirstIcon /><Gap $w={14} /><StepIcon />
                <PageInput>1 / 2<Caret $s={3} /></PageInput>
                <StepIcon next /><Gap $w={14} /><FirstIcon last /><Gap $w={12} />
                <PrevView /><Gap $w={10} /><PrevView off />
                <Gap $w={211} />
                <ViewMode><ViewSingle /></ViewMode>
                <ViewMode $on><ViewCont /></ViewMode>
                <ViewMode><ViewFacing /></ViewMode>
                <ViewMode><ViewFacingCont /></ViewMode>
                <ZoomValue>162.67%</ZoomValue>
                <Caret $s={3} /><Gap $w={4} />
                <RoundBtn />
                <Slider><SliderTick /><SliderKnob /></Slider>
                <RoundBtn plus />
            </StatusBar>

            <Taskbar>
                <StartBtn><WinLogo /></StartBtn>
                <SearchBox><Search size={16} strokeWidth={1.4} color="#222" style={{ transform: "scaleX(-1)" }} /><span>Type here to search</span></SearchBox>
                <TaskApps>
                    <TaskApp $open><ChromeApp /></TaskApp>
                    <TaskApp><GameApp /></TaskApp>
                    <TaskApp><WordApp /></TaskApp>
                    <TaskApp><EdgeApp /></TaskApp>
                    <TaskApp><RedC /></TaskApp>
                    <TaskApp><OperaIcon s={26} /></TaskApp>
                    <TaskApp><FolderApp /></TaskApp>
                    <TaskApp $on $open><FoxitApp /></TaskApp>
                </TaskApps>
                <Tray>
                    <TrayBt /><TrayS /><TrayZalo /><TrayOrange /><TrayRing /><TrayBrush /><TrayDisc /><TrayV /><TrayPlug /><OperaIcon s={16} /><TrayVolume /><TrayWifi />
                    <Lang>ENG</Lang>
                    <Clock>8:31 AM<br />1/29/2022</Clock>
                    <NotifyIcon />
                </Tray>
            </Taskbar>
        </Screen>
    );
}
